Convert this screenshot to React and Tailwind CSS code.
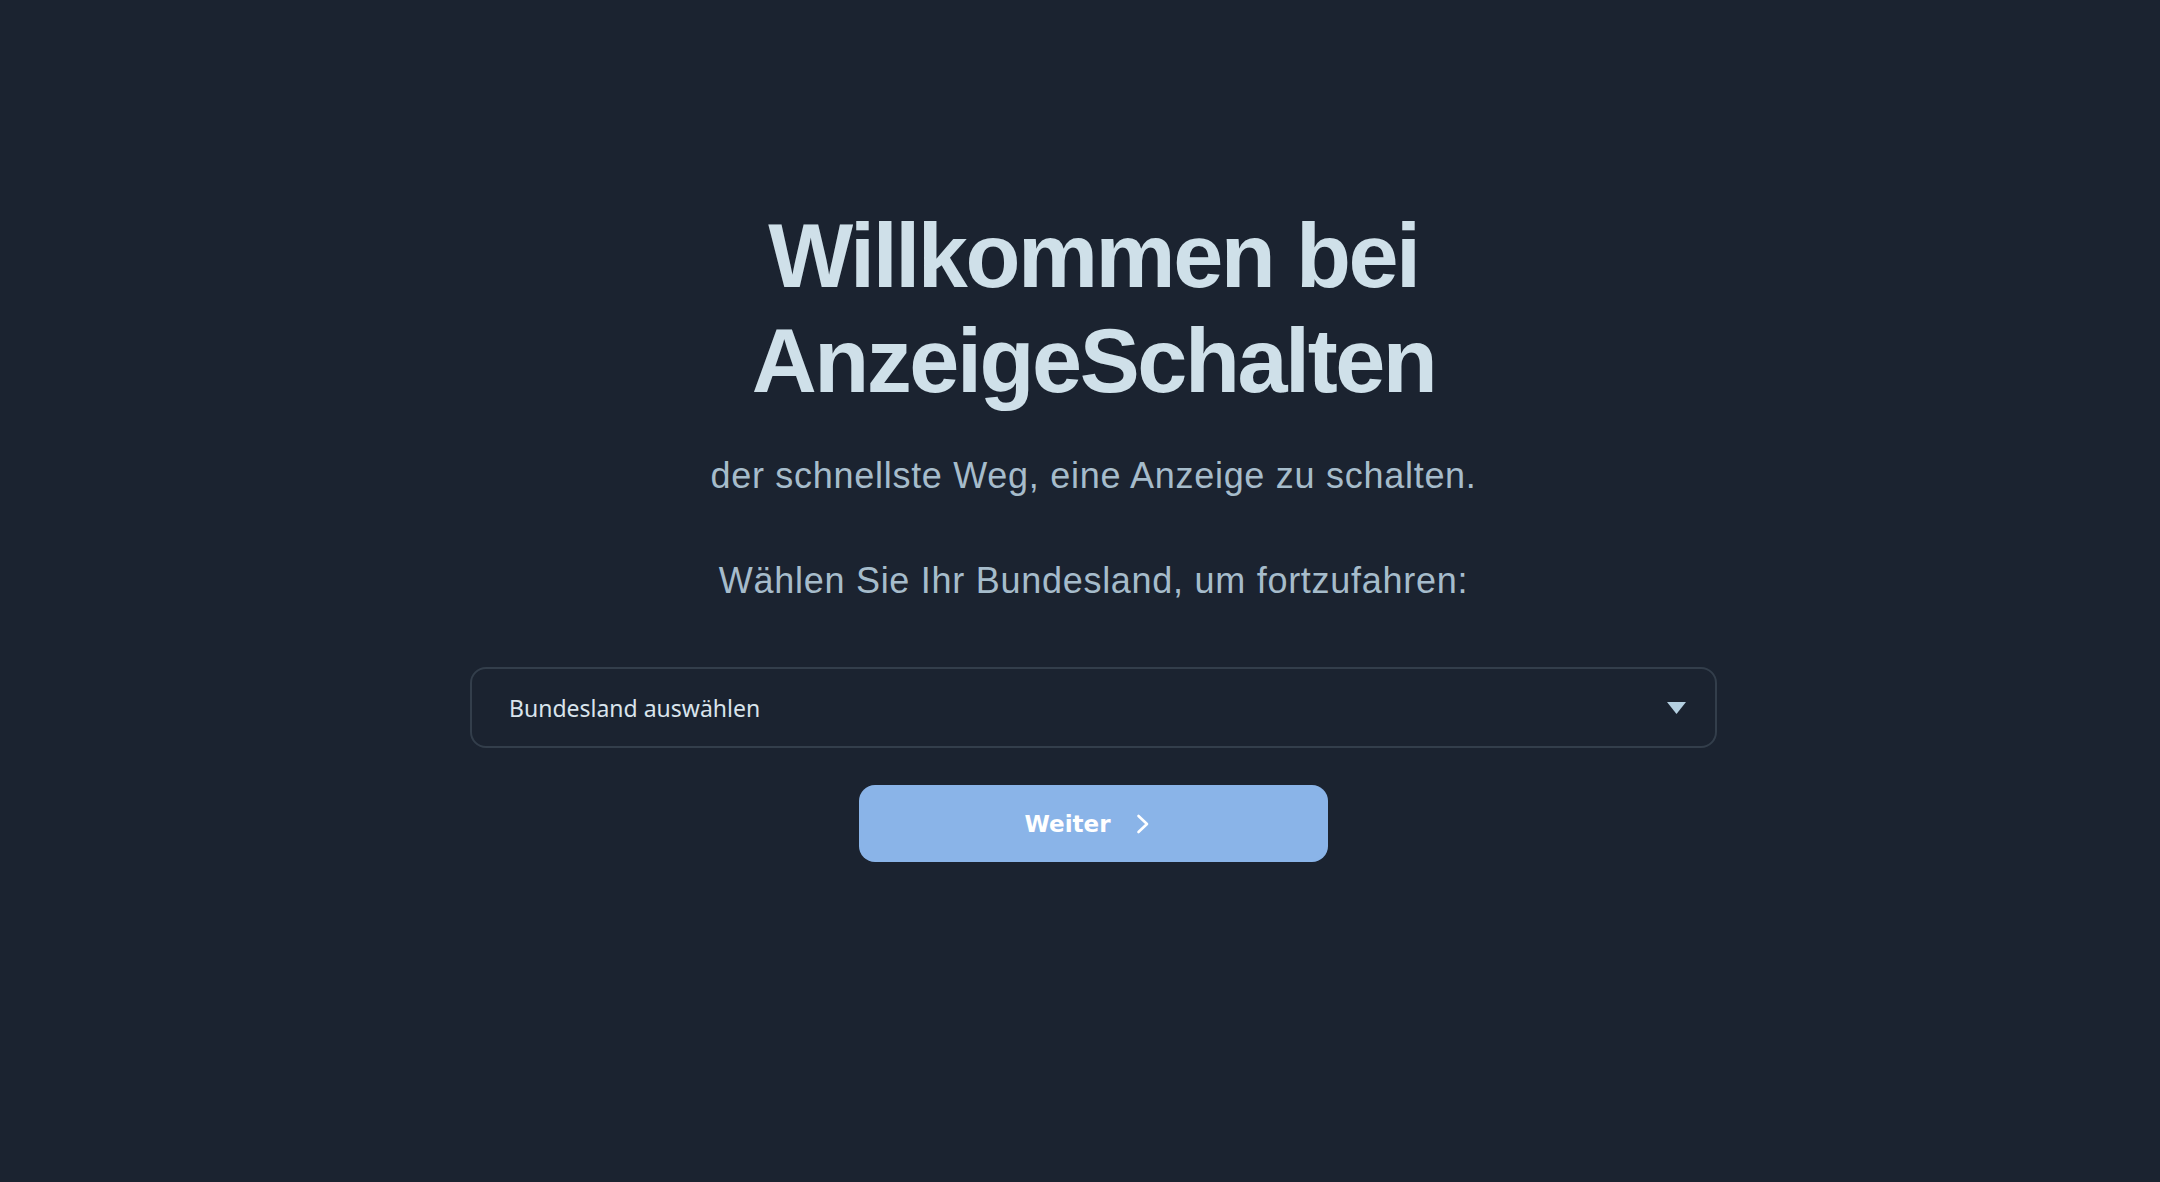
const Triangle = () => (
  <svg width="19" height="12" viewBox="0 0 19 12" className="shrink-0">
    <path d="M0 0 H19 L9.5 12 Z" fill="#b4cfe0" />
  </svg>
);

const Chevron = () => (
  <svg width="14" height="20" viewBox="0 0 14 20" className="shrink-0">
    <path d="M2.5 2 L11 10 L2.5 18" fill="none" stroke="#ffffff" strokeWidth="2.6" strokeLinecap="round" strokeLinejoin="round" />
  </svg>
);

export default function App() {
  return (
    <div className="min-h-screen w-full bg-[#1b2330] pl-[27px] pt-[204px]">
      <div className="mx-auto flex w-[1247px] flex-col items-center">
        <h1 className="text-center font-['Liberation_Sans',Arial,sans-serif] text-[90px] font-bold leading-[105px] tracking-[-0.027em] text-[#cfe0e9]">
          Willkommen bei
          <br />
          AnzeigeSchalten
        </h1>

        <p className="mt-[42px] text-center font-['Liberation_Sans',Arial,sans-serif] text-[36px] leading-[40px] tracking-[0.02em] text-[#a6bccb]">
          der schnellste Weg, eine Anzeige zu schalten.
        </p>
        <p className="mt-[65px] text-center font-['Liberation_Sans',Arial,sans-serif] text-[36px] leading-[40px] tracking-[0.02em] text-[#a6bccb]">
          Wählen Sie Ihr Bundesland, um fortzufahren:
        </p>

        <div className="mt-[66px] flex h-[81px] w-full items-center justify-between rounded-[16px] border-2 border-[#333e4b] bg-[#1b2330] pl-[37px] pr-[29px]">
          <span className="pt-[2px] font-['Noto_Sans',sans-serif] text-[23px] text-[#d9e4ec]">Bundesland auswählen</span>
          <Triangle />
        </div>

        <button className="mt-[37px] flex h-[77px] w-[469px] items-center justify-center rounded-[16px] bg-[#8ab4e8] pr-[12px]">
          <span className="pt-[2px] font-['DejaVu_Sans',sans-serif] text-[23px] font-bold text-white">Weiter</span>
          <span className="ml-[26px] flex">
            <Chevron />
          </span>
        </button>
      </div>
    </div>
  );
}
